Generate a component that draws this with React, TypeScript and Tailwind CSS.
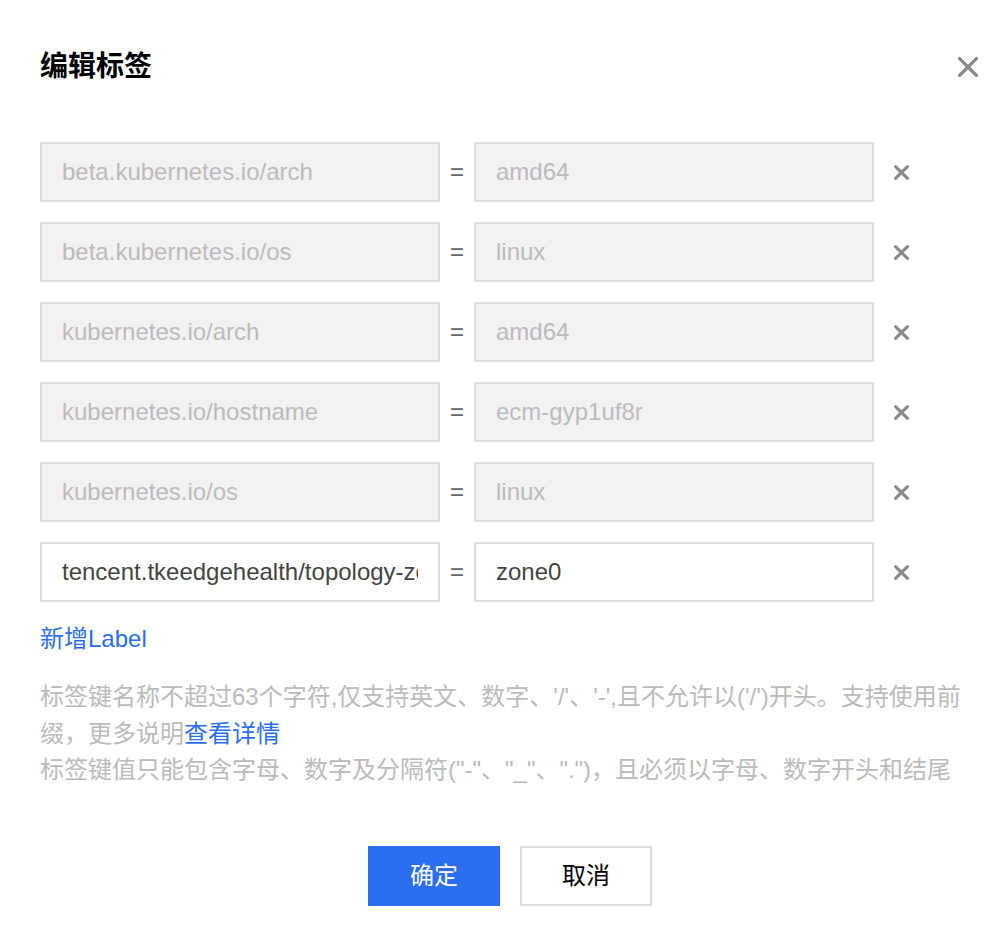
import React from 'react';

const rows = [
  { k: 'beta.kubernetes.io/arch', v: 'amd64', locked: true },
  { k: 'beta.kubernetes.io/os', v: 'linux', locked: true },
  { k: 'kubernetes.io/arch', v: 'amd64', locked: true },
  { k: 'kubernetes.io/hostname', v: 'ecm-gyp1uf8r', locked: true },
  { k: 'kubernetes.io/os', v: 'linux', locked: true },
  { k: 'tencent.tkeedgehealth/topology-zone', v: 'zone0', locked: false },
];

const font = { fontFamily: '"Liberation Sans", "Noto Sans CJK SC", sans-serif' };

const Cross = ({ size, stroke, color }: { size: number; stroke: number; color: string }) => (
  <svg width={size} height={size} viewBox="0 0 20 20" fill="none">
    <path d="M3 3L17 17M17 3L3 17" stroke={color} strokeWidth={stroke} strokeLinecap="round" />
  </svg>
);

export default function App() {
  return (
    <div className="w-[1008px] h-[948px] bg-white text-[#333]" style={font}>
      <div className="flex items-start justify-between pl-10 pr-7 pt-[48px]">
        <h1 className="text-[28px] leading-[38px] font-bold text-black">编辑标签</h1>
        <button className="mt-[7px]">
          <Cross size={24} stroke={2.8} color="#888" />
        </button>
      </div>

      <div className="mt-[56px] pl-10 flex flex-col gap-5">
        {rows.map((r) => (
          <div key={r.k} className="flex items-center">
            <div
              className={`w-[400px] h-[60px] border-2 border-[#ddd] px-5 flex items-center text-[24px] ${
                r.locked ? 'bg-[#f2f2f2] text-[#bbb]' : 'bg-white text-[#444]'
              }`}
            >
              <span className="block w-full overflow-hidden whitespace-nowrap">{r.k}</span>
            </div>
            <div className="w-[34px] text-center text-[24px] text-[#666]">=</div>
            <div
              className={`w-[400px] h-[60px] border-2 border-[#ddd] px-5 flex items-center text-[24px] ${
                r.locked ? 'bg-[#f2f2f2] text-[#bbb]' : 'bg-white text-[#444]'
              }`}
            >
              {r.v}
            </div>
            <div className="ml-[19px] flex">
              <Cross size={17} stroke={3.6} color="#888" />
            </div>
          </div>
        ))}
      </div>

      <div className="pl-10 mt-[22px] text-[24px] leading-[30px] text-[#2b6ff0]">新增Label</div>

      <div className="pl-10 pr-8 mt-[25px] text-[24px] leading-[36.5px] text-[#bbb]">
        <p>
          标签键名称不超过63个字符,仅支持英文、数字、'/'、'-',且不允许以('/')开头。支持使用前缀，更多说明
          <span className="text-[#2b6ff0]">查看详情</span>
        </p>
        <p>标签键值只能包含字母、数字及分隔符("-"、"_"、".")，且必须以字母、数字开头和结尾</p>
      </div>

      <div className="mt-[57px] pl-3 flex justify-center gap-5 text-[24px]">
        <button className="w-[132px] h-[60px] bg-[#2b6ff0] text-white">确定</button>
        <button className="w-[132px] h-[60px] border-2 border-[#ddd] bg-white text-black">取消</button>
      </div>
    </div>
  );
}
